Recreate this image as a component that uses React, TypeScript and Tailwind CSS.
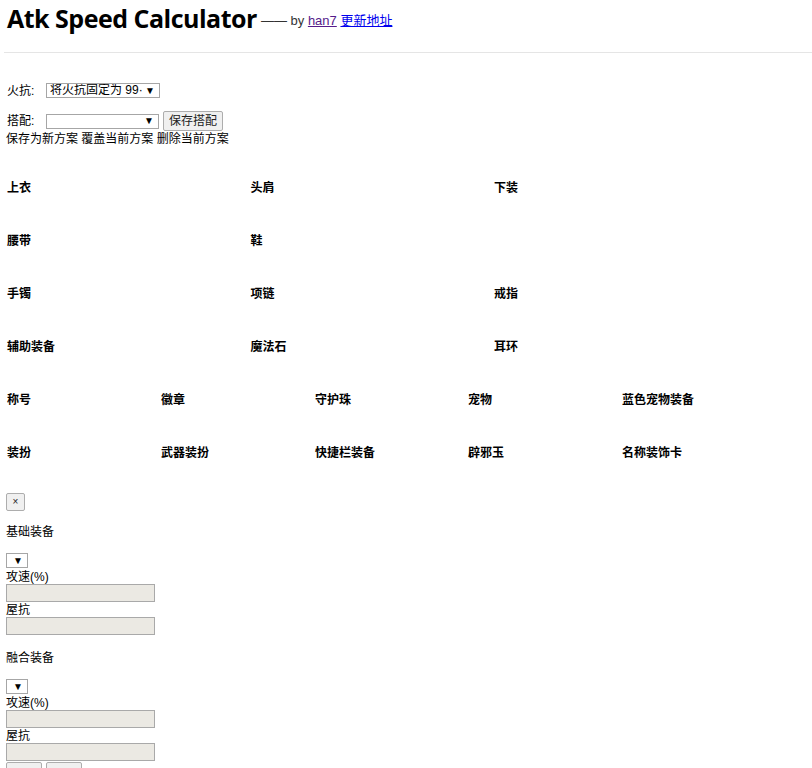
import React from 'react';

const cjk = "font-['Liberation_Sans','Noto_Sans_CJK_SC',sans-serif]";

const Select = ({ w, text }: { w: string; text?: string }) => (
  <div className={`flex items-center justify-between h-[15px] ${w} border border-[#a6a6a6] bg-white pl-[3px] pr-[4px] text-[12px] leading-[13px] text-black`}>
    <span className="whitespace-nowrap overflow-hidden">{text}</span>
    <span className="text-[10px] leading-none">▼</span>
  </div>
);

const Btn = ({ children, cls }: { children: React.ReactNode; cls: string }) => (
  <button className={`flex items-center justify-center border border-[#adadad] bg-[#f0f0f0] rounded-[2px] text-[#222] ${cls}`}>
    {children}
  </button>
);

const Field = () => (
  <div className="h-[18px] w-[149px] border border-[#a9a9a9] bg-[#ebe9e3]" />
);

const rows3 = [
  ['上衣', '头肩', '下装'],
  ['腰带', '鞋', ''],
  ['手镯', '项链', '戒指'],
  ['辅助装备', '魔法石', '耳环'],
];

const rows5 = [
  ['称号', '徽章', '守护珠', '宠物', '蓝色宠物装备'],
  ['装扮', '武器装扮', '快捷栏装备', '辟邪玉', '名称装饰卡'],
];

const EquipBlock = ({ title }: { title: string }) => (
  <div className="flex flex-col">
    <div className="h-[14px] leading-[14px]">{title}</div>
    <div className="h-[14px]" />
    <Select w="w-[22px]" />
    <div className="h-[2px]" />
    <div className="h-[14px] leading-[14px]">攻速(%)</div>
    <Field />
    <div className="h-[14px] leading-[14px] mt-[1px]">屋抗</div>
    <Field />
  </div>
);

export default function App() {
  return (
    <div className={`w-[812px] h-[768px] overflow-hidden bg-white text-black text-[12px] ${cjk}`}>
      {/* header */}
      <div className="flex items-end h-[33px] pl-[7px]">
        <h1 className="font-['Open_Sans',sans-serif] font-bold text-[25px] leading-[30px] tracking-[-0.5px]">
          Atk Speed Calculator
        </h1>
        <span className="ml-[4px] mb-[5px] text-[13px] leading-[14px] text-[#333]">
          —— by <a className="text-[#551a8b] underline">han7</a> <a className="text-[#0000ee] underline">更新地址</a>
        </span>
      </div>
      <div className="ml-[4px] mt-[19px] h-px bg-[#e5e5e5]" />

      <div className="px-[7px]">
        <div className="mt-[30px] flex items-center h-[15px]">
          <span className="w-[39px]">火抗:</span>
          <Select w="w-[114px]" text="将火抗固定为 99·" />
        </div>
        <div className="mt-[13px] flex items-center h-[20px]">
          <span className="w-[39px]">搭配:</span>
          <Select w="w-[113px]" />
          <Btn cls="ml-[4px] h-[20px] w-[60px] text-[12px]">保存搭配</Btn>
        </div>
        <div className="h-[14px] leading-[14px] mt-[1px] -ml-[1px]">保存为新方案 覆盖当前方案 删除当前方案</div>

        {/* slots */}
        <div className="mt-[15px] font-bold">
          {rows3.map((r, i) => (
            <div key={i} className="grid grid-cols-[243.5px_243.5px_1fr] h-[53px] items-center">
              {r.map((c, j) => (
                <div key={j}>{c}</div>
              ))}
            </div>
          ))}
          {rows5.map((r, i) => (
            <div key={i} className="grid grid-cols-[154px_154px_153px_154px_1fr] h-[53px] items-center">
              {r.map((c, j) => (
                <div key={j}>{c}</div>
              ))}
            </div>
          ))}
        </div>
      </div>

      <div className="pl-[6px]">
        <Btn cls="mt-[14px] h-[18px] w-[19px] text-[10px] leading-none">×</Btn>
        <div className="h-[14px]" />
        <EquipBlock title="基础装备" />
        <div className="h-[16px]" />
        <EquipBlock title="融合装备" />
        <div className="flex gap-[4px] mt-[1px]">
          <Btn cls="h-[18px] w-[36px]">{''}</Btn>
          <Btn cls="h-[18px] w-[36px]">{''}</Btn>
        </div>
      </div>
    </div>
  );
}
